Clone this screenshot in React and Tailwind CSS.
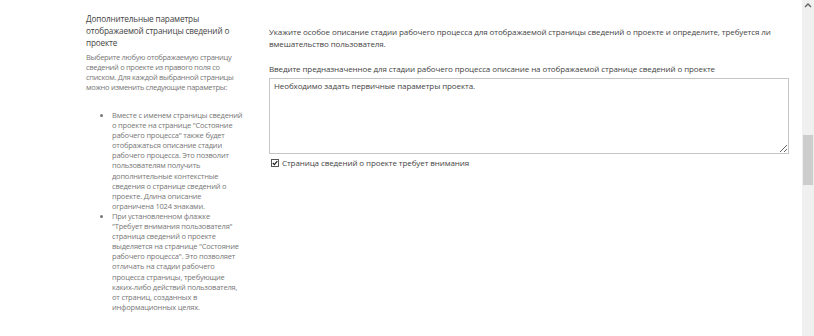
const firstNote = [
  "Вместе с именем страницы сведений",
  "о проекте на странице \"Состояние",
  "рабочего процесса\" также будет",
  "отображаться описание стадии",
  "рабочего процесса. Это позволит",
  "пользователям получить",
  "дополнительные контекстные",
  "сведения о странице сведений о",
  "проекте. Длина описание",
  "ограничена 1024 знаками.",
]

const secondNote = [
  "При установленном флажке",
  "\"Требует внимания пользователя\"",
  "страница сведений о проекте",
  "выделяется на странице \"Состояние",
  "рабочего процесса\". Это позволяет",
  "отличать на стадии рабочего",
  "процесса страницы, требующие",
  "каких-либо действий пользователя,",
  "от страниц, созданных в",
  "информационных целях.",
]

function Lines({ lines }) {
  return lines.map((line, i) => (
    <span key={i} className="block whitespace-nowrap">{line}</span>
  ))
}

export default function App() {
  return (
    <div className="flex w-[814px] h-[336px] bg-white overflow-hidden" style={{ fontFamily: "'Open Sans', 'Noto Sans', sans-serif" }}>
      <div className="flex-1 flex pl-[86px] pt-[13px]">
        <div className="w-[164px] shrink-0">
          <h3 className="text-[8.2px] leading-[12px] tracking-[-0.15px] text-[#444444] font-normal pr-[10px]">
            Дополнительные параметры отображаемой страницы сведений о проекте
          </h3>
          <p className="text-[7.5px] leading-[10px] tracking-[-0.3px] text-[#777777] mt-[3px]">
            Выберите любую отображаемую страницу сведений о проекте из правого поля со списком. Для каждой выбранной страницы можно изменить следующие параметры:
          </p>
          <ul className="list-disc pl-[26px] mt-[18px] text-[7.5px] leading-[10.1px] tracking-[-0.2px] text-[#777777] marker:text-[#777777]">
            <li><Lines lines={firstNote} /></li>
            <li><Lines lines={secondNote} /></li>
          </ul>
        </div>
        <div className="ml-[19px] w-[522px] pt-[13px] text-[8px] leading-[12px] tracking-[-0.1px] text-[#444444]">
          <p>
            Укажите особое описание стадии рабочего процесса для отображаемой страницы сведений о проекте и определите, требуется ли вмешательство пользователя.
          </p>
          <label className="block mt-[13px]">
            Введите предназначенное для стадии рабочего процесса описание на отображаемой странице сведений о проекте
          </label>
          <textarea
            defaultValue="Необходимо задать первичные параметры проекта."
            className="block mt-[3px] w-[520px] h-[76px] border border-[#c6c6c6] px-[4px] pt-[1px] text-[8px] leading-[12px] tracking-[-0.1px] text-[#444444] outline-none resize-y"
          />
          <label className="flex items-center gap-[3px] mt-[3px] ml-[2px]">
            <span className="w-[8px] h-[8px] border border-[#555555] bg-white flex items-center justify-center">
              <svg width="6" height="6" viewBox="0 0 6 6">
                <path d="M0.8 3 L2.4 4.6 L5.3 1.2" fill="none" stroke="#222222" strokeWidth="1.3" />
              </svg>
            </span>
            <span>Страница сведений о проекте требует внимания</span>
          </label>
        </div>
      </div>
      <div className="w-[12px] shrink-0 bg-[#f0f0f0] flex flex-col items-center">
        <svg width="8" height="6" viewBox="0 0 8 6" className="mt-[2px]">
          <path d="M1 5 L4 2 L7 5" fill="none" stroke="#606060" strokeWidth="1.4" />
        </svg>
        <div className="w-[10px] h-[50px] bg-[#cdcdcd] mt-[127px]" />
      </div>
    </div>
  )
}
